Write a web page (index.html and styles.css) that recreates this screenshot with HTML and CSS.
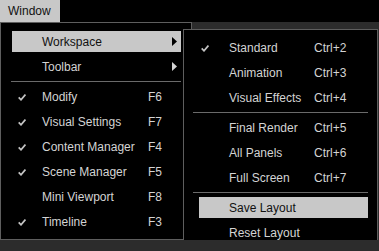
FILE: index.html
```html
<!DOCTYPE html>
<html lang="en">
<head>
    <meta charset="UTF-8">
    <title>Window menu</title>
    <link rel="stylesheet" href="styles.css">
</head>
<body>
<div class="menubar">
    <div class="menubar__item menubar__item--open">Window</div>
</div>

<div class="menu-area">
    <div class="menu menu--main">
        <div class="item item--active">
            <span class="item__check"></span>
            <span class="item__label">Workspace</span>
            <span class="item__key"></span>
            <svg class="item__arrow" width="5" height="9" viewBox="0 0 5 9"><polygon points="0,0 5,4.5 0,9"/></svg>
        </div>
        <div class="item">
            <span class="item__check"></span>
            <span class="item__label">Toolbar</span>
            <span class="item__key"></span>
            <svg class="item__arrow" width="5" height="9" viewBox="0 0 5 9"><polygon points="0,0 5,4.5 0,9"/></svg>
        </div>
        <div class="separator"></div>
        <div class="item">
            <span class="item__check"><svg width="8" height="7" viewBox="0 0 8 7"><polyline points="0.7,3.4 3,5.8 7.4,0.6"/></svg></span>
            <span class="item__label">Modify</span>
            <span class="item__key">F6</span>
        </div>
        <div class="item">
            <span class="item__check"><svg width="8" height="7" viewBox="0 0 8 7"><polyline points="0.7,3.4 3,5.8 7.4,0.6"/></svg></span>
            <span class="item__label">Visual Settings</span>
            <span class="item__key">F7</span>
        </div>
        <div class="item">
            <span class="item__check"><svg width="8" height="7" viewBox="0 0 8 7"><polyline points="0.7,3.4 3,5.8 7.4,0.6"/></svg></span>
            <span class="item__label">Content Manager</span>
            <span class="item__key">F4</span>
        </div>
        <div class="item">
            <span class="item__check"><svg width="8" height="7" viewBox="0 0 8 7"><polyline points="0.7,3.4 3,5.8 7.4,0.6"/></svg></span>
            <span class="item__label">Scene Manager</span>
            <span class="item__key">F5</span>
        </div>
        <div class="item">
            <span class="item__check"></span>
            <span class="item__label">Mini Viewport</span>
            <span class="item__key">F8</span>
        </div>
        <div class="item">
            <span class="item__check"><svg width="8" height="7" viewBox="0 0 8 7"><polyline points="0.7,3.4 3,5.8 7.4,0.6"/></svg></span>
            <span class="item__label">Timeline</span>
            <span class="item__key">F3</span>
        </div>
    </div>

    <div class="menu menu--sub">
        <div class="item">
            <span class="item__check"><svg width="8" height="7" viewBox="0 0 8 7"><polyline points="0.7,3.4 3,5.8 7.4,0.6"/></svg></span>
            <span class="item__label">Standard</span>
            <span class="item__key">Ctrl+2</span>
        </div>
        <div class="item">
            <span class="item__check"></span>
            <span class="item__label">Animation</span>
            <span class="item__key">Ctrl+3</span>
        </div>
        <div class="item">
            <span class="item__check"></span>
            <span class="item__label">Visual Effects</span>
            <span class="item__key">Ctrl+4</span>
        </div>
        <div class="separator"></div>
        <div class="item">
            <span class="item__check"></span>
            <span class="item__label">Final Render</span>
            <span class="item__key">Ctrl+5</span>
        </div>
        <div class="item">
            <span class="item__check"></span>
            <span class="item__label">All Panels</span>
            <span class="item__key">Ctrl+6</span>
        </div>
        <div class="item">
            <span class="item__check"></span>
            <span class="item__label">Full Screen</span>
            <span class="item__key">Ctrl+7</span>
        </div>
        <div class="separator"></div>
        <div class="item item--active">
            <span class="item__check"></span>
            <span class="item__label">Save Layout</span>
            <span class="item__key"></span>
        </div>
        <div class="item">
            <span class="item__check"></span>
            <span class="item__label">Reset Layout</span>
            <span class="item__key"></span>
        </div>
    </div>
</div>
</body>
</html>
```

FILE: styles.css
```css
html, body {
    margin: 0;
    padding: 0;
    background-color: #2c2c2c;
    font-family: "Liberation Sans", Arial, sans-serif;
    font-size: 12px;
    color: #d4d4d4;
}

.menubar {
    height: 22px;
    background-color: #000;
    display: flex;
}

.menubar__item {
    width: 52px;
    padding-left: 8px;
    line-height: 23px;
}

.menubar__item--open {
    background-color: #c8c8c8;
    color: #111;
}

.menu-area {
    position: relative;
}

.menu {
    box-sizing: border-box;
    background-color: #000;
    border: 1px solid #5e5e5e;
    display: flex;
    flex-direction: column;
}

.menu--main {
    width: 192px;
    height: 218px;
    padding-top: 8px;
}

/* submenu opens over the right edge of the main menu */
.menu--sub {
    position: absolute;
    left: 183px;
    top: 7px;
    width: 195px;
    height: 222px;
    padding-top: 7px;
}

.item {
    position: relative;
    flex-shrink: 0;
    height: 21px;
    line-height: 22px;
    margin: 4px 10px 0 10px;
    display: grid;
    white-space: nowrap;
}

.item:first-child {
    margin-top: 0;
}

.menu--main .item {
    margin-left: 11px;
    padding-left: 6px;
    grid-template-columns: 24px 106px 1fr;
}

.menu--sub .item {
    margin-left: 15px;
    margin-right: 9px;
    padding-left: 2px;
    grid-template-columns: 28px 85px 1fr;
}

.item--active {
    background-color: #c8c8c8;
    color: #111;
}

.item__check {
    display: flex;
    align-items: center;
    padding-top: 1px;
}

.item__check svg {
    fill: none;
    stroke: #c4c4c4;
    stroke-width: 1.7;
}

.item__arrow {
    position: absolute;
    left: 160px;
    top: 6px;
    fill: #d4d4d4;
}

.item--active .item__arrow {
    fill: #000;
}

.separator {
    flex-shrink: 0;
    height: 1px;
    background-color: #6a6a6a;
    margin: 4px 10px 0 10px;
}

.menu--sub .separator {
    margin-left: 9px;
    margin-right: 9px;
}
```
